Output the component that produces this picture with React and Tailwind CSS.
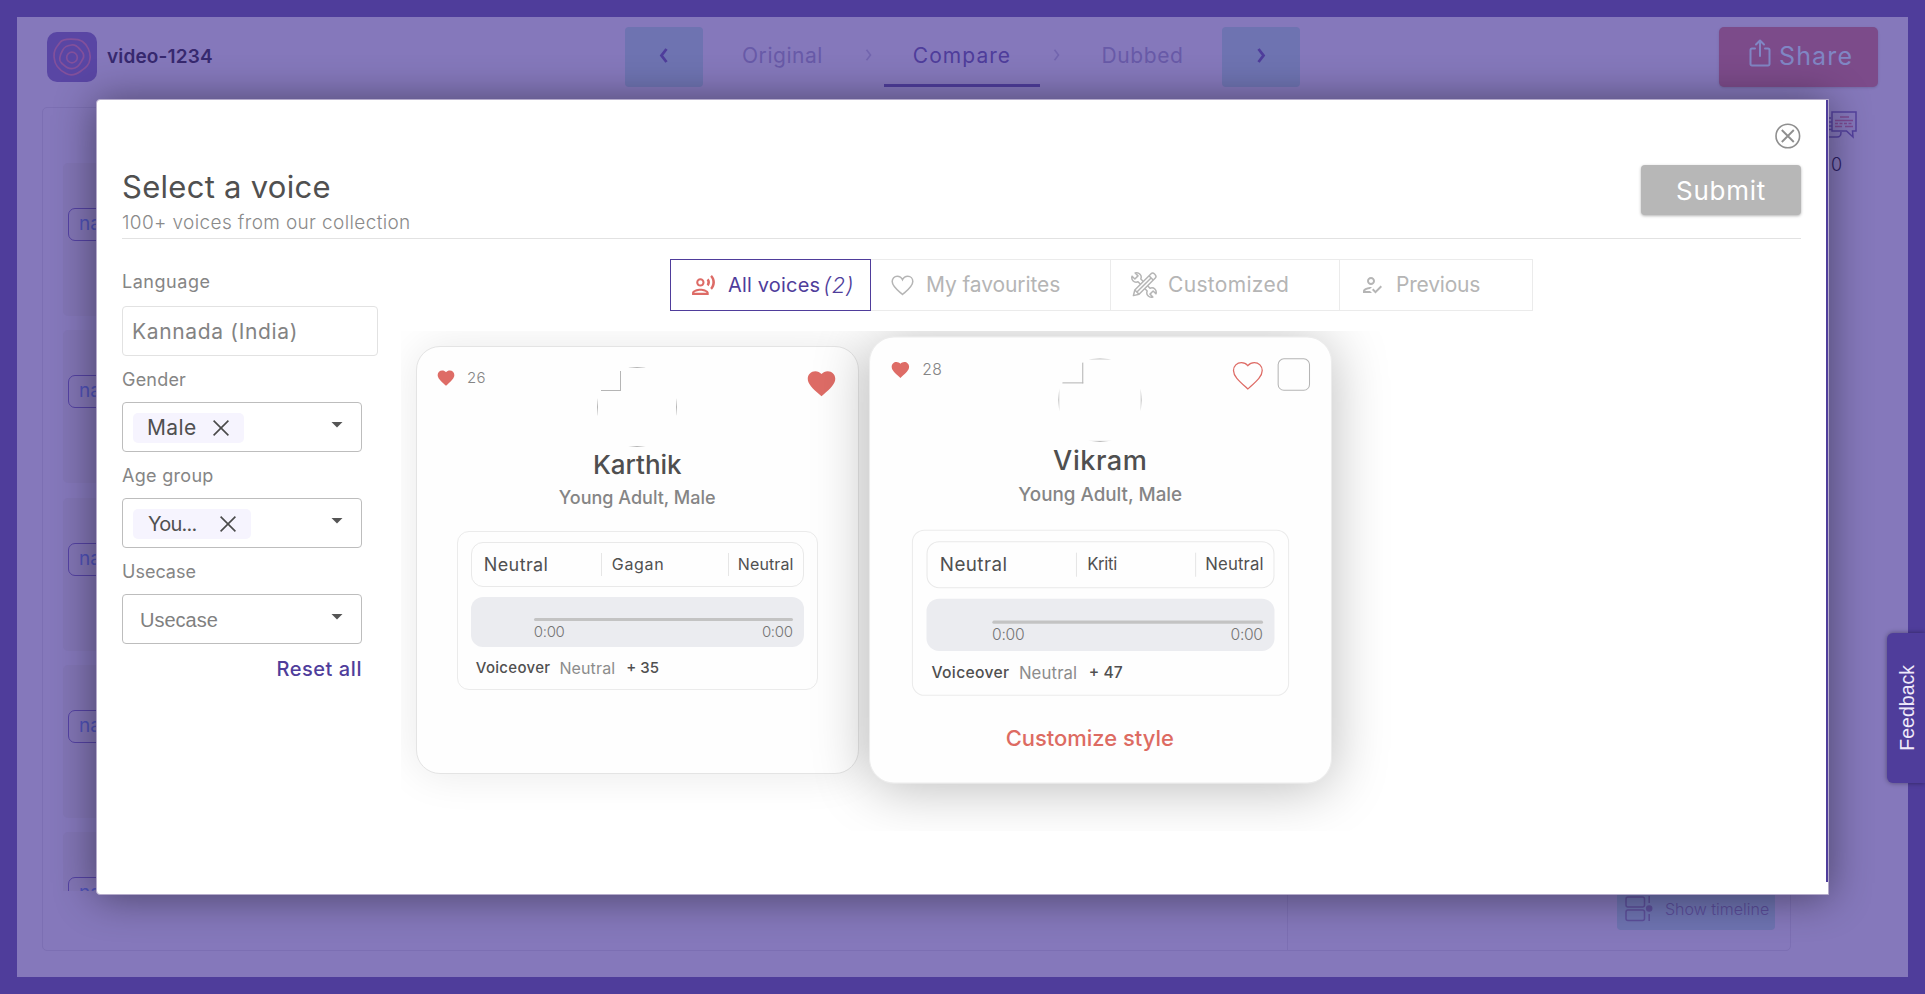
import { MdFavorite, MdOutlineRecordVoiceOver, MdOutlineHowToReg } from "react-icons/md";

const HEART =
  "m12 21.35-1.45-1.32C5.4 15.36 2 12.28 2 8.5 2 5.42 4.42 3 7.5 3c1.74 0 3.41.81 4.5 2.09C13.09 3.81 14.76 3 16.5 3 19.58 3 22 5.42 22 8.5c0 3.78-3.4 6.86-8.55 11.54L12 21.35z";

function ToolsIcon() {
  return (
    <svg width="26" height="26" viewBox="0 0 26 26" fill="none" stroke="#b5b5b5" strokeWidth="1.5" strokeLinejoin="round">
      <g transform="rotate(-45 13 13)">
        <path d="M11 6.500v13c-1.800.8-2.800 2.200-2.800 4 0 2 1 3.400 2.600 4.200v-4h4.400v4c1.600-.8 2.600-2.200 2.600-4.200 0-1.800-1-3.200-2.800-4v-13c1.800-.8 2.800-2.200 2.800-4 0-2-1-3.400-2.600-4.200v4h-4.400v-4C9.200-.900 8.200.500 8.200 2.500c0 1.800 1 3.200 2.800 4z" />
      </g>
      <g transform="rotate(45 13 13)">
        <path d="M10 0c0-3 6-3 6 0v23l-3 5-3-5z" fill="#fff" />
        <path d="M10 3h6M10 23h6M13 3v20" />
      </g>
    </svg>
  );
}

function Rings() {
  return (
    <svg width="38" height="38" viewBox="0 0 38 38" fill="none" stroke="#82509b" strokeWidth="1.7">
      <path d="M7 4.500C10 0 25 .5 29.500 3.500 34 6.500 38 14 37 21s-5 9-9 12-10 5-15 2.500S2 29 1.200 20 4 9 7 4.500z" />
      <path d="M9.500 12.500c2-4 4-4.500 9-5.500s7 3 9.500 5.500 3.500 6 1.500 9-3 8-9.500 9-8.500-3-11.500-5.500-1.500-8 1-12.500z" />
      <circle cx="19" cy="19.500" r="5.300" />
    </svg>
  );
}

function ShareIcon() {
  return (
    <svg width="22" height="28" viewBox="0 0 22 28" fill="none" stroke="#8086c4" strokeWidth="2" strokeLinecap="round" strokeLinejoin="round">
      <path d="M6 9.500H3a1.500 1.500 0 0 0-1.500 1.500v14A1.500 1.500 0 0 0 3 26.500h16a1.500 1.500 0 0 0 1.500-1.500V11A1.500 1.500 0 0 0 19 9.500h-3M11 17V2M7 5.500 11 1.500l4 4" />
    </svg>
  );
}

function ChatIcon() {
  return (
    <svg width="40" height="28" viewBox="0 0 40 28" fill="none" stroke="#54419f" strokeWidth="1.500">
      <path d="M14 7H3v16h2v4l5-1h10c3 0 4-1 4-5" />
      <path d="M15 1h24v19h-3.500l.5 6-6.500-6H15z" />
      <path d="M23 6h9M18 9.500h18M18 15.500h7M28 15.500h8" stroke="#7d4a93" />
      <path d="M18 12.500h18" stroke="#7d4a93" strokeDasharray="3 1.500" />
      <path d="M12 11h3M12 15h3M12 18.500h3" />
    </svg>
  );
}

function TimelineIcon() {
  return (
    <svg width="28" height="26" viewBox="0 0 28 26" fill="none" stroke="#5d4f9b" strokeWidth="1.500">
      <rect x="1" y="1" width="18.500" height="10" rx="2" />
      <rect x="1" y="14" width="18.500" height="10.500" rx="2" />
      <path d="M24.200 0v7M24.200 18v7" />
      <circle cx="24.200" cy="12.500" r="2.500" fill="#5d4f9b" />
    </svg>
  );
}

function Chevron({ dir, small }) {
  const d = dir === "left" ? "M8 1 3 7.500 8 14" : "M3 1l5 6.500L3 14";
  return small ? (
    <svg width="9" height="12" viewBox="0 0 11 15" fill="none" stroke="#7265ae" strokeWidth="2">
      <path d={d} />
    </svg>
  ) : (
    <svg width="12" height="15" viewBox="0 0 11 15" fill="none" stroke="#4f3d9b" strokeWidth="2.800">
      <path d={d} />
    </svg>
  );
}

function Header() {
  return (
    <header className="flex h-[80px] items-start">
      <div className="flex w-[608px] items-center pt-[15px] pl-[30px]">
        <div className="flex size-[50px] items-center justify-center rounded-[10px] bg-[#5946a4]">
          <Rings />
        </div>
        <span className="ml-[10px] text-[19px] leading-[50px] font-semibold tracking-[0.16px] text-[#37296f]">video-1234</span>
      </div>
      <nav className="mt-[10px] flex h-[60px] w-[675px] items-stretch text-[21px] leading-[57px]">
        <button className="flex w-[78px] items-center justify-center rounded-[4px] bg-[#6e73b1] pb-1">
          <Chevron dir="left" />
        </button>
        <span className="w-[159px] text-center tracking-[0.54px] text-[#685aa8]">Original</span>
        <span className="mr-[9px] flex w-[13px] items-center justify-center pb-1"><Chevron dir="right" small /></span>
        <span className="w-[156px] border-b-[3px] border-[#4f3d9b] text-center tracking-[1.04px] text-[#4f3d9b]">Compare</span>
        <span className="ml-[10px] flex w-[13px] items-center justify-center pb-1"><Chevron dir="right" small /></span>
        <span className="w-[159px] text-center tracking-[0.6px] text-[#685aa8]">Dubbed</span>
        <button className="flex w-[78px] items-center justify-center rounded-[4px] bg-[#6e73b1] pb-1">
          <Chevron dir="right" />
        </button>
      </nav>
      <button className="mt-[10px] mr-[30px] ml-auto flex h-[60px] w-[159px] rounded-[5px] bg-[#7c4b8a] pl-[30px] text-[#8086c4] shadow-sm">
        <span className="mt-[12px]"><ShareIcon /></span>
        <span className="ml-[8px] text-[25px] leading-[58px] tracking-[1.15px]">Share</span>
      </button>
    </header>
  );
}

function Workspace() {
  return (
    <div className="ml-[25px] flex pt-[10px]">
      <div className="flex h-[844px] w-[1749px] rounded-[5px] border border-[#7c6fb3]">
        <div className="w-[1245px] border-r border-[#7c6fb3] pt-[55px] pl-[20px]">
          <div className="h-[728px] space-y-[14.3px] overflow-hidden">
            {[0, 1, 2, 3, 4].map((i) => (
              <div key={i} className="h-[153px] w-[1180px] rounded-[5px] bg-[#8275b5] pt-[45px] pl-[5px]">
                <div className="h-[33px] w-[120px] rounded-[7px] border border-[#5442a3] pl-[10px] text-[19px] leading-[29px] text-[#4f51b8]">
                  name
                </div>
              </div>
            ))}
          </div>
        </div>
        <div className="flex flex-1 items-end justify-end pr-[15px] pb-[20px]">
          <button className="flex h-[46px] w-[158px] items-center rounded-[4px] bg-[#6e73b1] pt-[4px] pl-[8px] text-[16px] font-light whitespace-nowrap text-[#5a4c99]">
            <TimelineIcon />
            <span className="ml-[12px]">Show timeline</span>
          </button>
        </div>
      </div>
      <div className="pt-[4px] pl-[26px]">
        <ChatIcon />
        <div className="mt-[14px] ml-[14px] text-[18px] leading-[24px] font-light text-[#2e2166]">0</div>
      </div>
    </div>
  );
}

function CloseX() {
  return (
    <svg width="16" height="16" viewBox="0 0 16 16" fill="none" stroke="#4a4a4a" strokeWidth="1.600">
      <path d="M.6.600l14.800 14.800M15.400.600.600 15.400" />
    </svg>
  );
}

function Field({ label, tracking, children }) {
  return (
    <div>
      <div className={"mt-[11px] mb-[10px] text-[18px] leading-[25px] text-[#858585] " + tracking}>{label}</div>
      <div className="flex h-[50px] w-[240px] items-center rounded-[4px] border border-[#bdbdbd] pr-[18px] pl-[10px]">
        {children}
        <svg className="mb-[4px] ml-auto" width="12" height="6" viewBox="0 0 12 6"><path d="M.5 0h11L6 5.500z" fill="#555" /></svg>
      </div>
    </div>
  );
}

function Sidebar() {
  return (
    <aside className="w-[279px] pt-[31px]">
      <div className="text-[18px] leading-[24px] tracking-[0.53px] text-[#858585]">Language</div>
      <div className="mt-[12px] h-[50px] w-[256px] rounded-[4px] border border-[#e2e2e2] pl-[9px] text-[21px] leading-[50px] tracking-[0.66px] text-[#838383]">
        Kannada (India)
      </div>
      <Field label="Gender" tracking="tracking-[0.2px]">
        <span className="mt-[2px] flex h-[30px] w-[111px] items-center rounded-[5px] bg-[#f6f4fe] pl-[14px]">
          <span className="w-[66px] text-[21px] tracking-[0.4px] text-[#505050]">Male</span>
          <CloseX />
        </span>
      </Field>
      <Field label="Age group" tracking="tracking-[0.3px]">
        <span className="mt-[2px] flex h-[30px] w-[118px] items-center rounded-[5px] bg-[#f6f4fe] pl-[15px]">
          <span className="w-[72px] text-[20px] tracking-[-0.78px] text-[#505050]">You...</span>
          <CloseX />
        </span>
      </Field>
      <Field label="Usecase" tracking="tracking-[0px]">
        <span className="pt-[2px] pl-[7px] font-['Liberation_Sans',sans-serif] text-[20px] text-[#808080]">Usecase</span>
      </Field>
      <div className="mt-[13px] w-[240px] text-right text-[20px] leading-[24px] font-medium tracking-[0.56px] text-[#4f3d9b]">Reset all</div>
    </aside>
  );
}

function Tabs() {
  return (
    <div className="ml-[269px] flex h-[52px] text-[21px] leading-[52px] text-[#b5b5b5]">
      <div className="flex w-[201px] items-center border border-[#4f3d9b] pl-[20px] text-[20px] text-[#4f3d9b]">
        <MdOutlineRecordVoiceOver size={25} color="#dd6b66" />
        <span className="ml-[12px] tracking-[0.18px]">All voices</span>
        <span className="ml-[3px] text-[22px] font-light tracking-[0.8px] italic">(2)</span>
      </div>
      <div className="flex w-[240px] items-center border-y border-r border-[#ebebeb] pl-[20px]">
        <svg width="23" height="21" viewBox="0 0 23 21" fill="none" stroke="#b5b5b5" strokeWidth="1.500">
          <path d="M11.500 19.500C7 15.500 1.200 11.500 1.200 6.500 1.200 3.500 3.400 1.300 6.200 1.300c2.300 0 4.300 1.300 5.300 3.500 1-2.200 3-3.500 5.300-3.500 2.800 0 5 2.200 5 5.200 0 5-5.800 9-10.300 13z" />
        </svg>
        <span className="ml-[12px] tracking-[-0.1px]">My favourites</span>
      </div>
      <div className="flex w-[229px] items-center border-y border-r border-[#ebebeb] pl-[20px]">
        <ToolsIcon />
        <span className="ml-[11px] tracking-[0.32px]">Customized</span>
      </div>
      <div className="flex w-[193px] items-center border-y border-r border-[#ebebeb] pl-[20px]">
        <MdOutlineHowToReg size={24} />
        <span className="ml-[12px] tracking-[-0.2px]">Previous</span>
      </div>
    </div>
  );
}

function Avatar() {
  return (
    <div className="size-[80px] overflow-hidden rounded-full">
      <div className="size-[80px] border border-[#b5b5b5] pt-[3px] pl-[3px]">
        <div className="size-[20px] border-r border-b border-[#b5b5b5]" />
      </div>
    </div>
  );
}

function VoiceCard({ likes, name, nameTracking, actor, columns, extra, selected }) {
  return (
    <article
      className={
        "h-[428px] w-[442.5px] shrink-0 rounded-[24px] border bg-[#fefefe] " +
        (selected
          ? "z-10 scale-[1.045] border-[#ececec] shadow-[0_4px_54px_rgba(0,0,0,0.27)]"
          : "border-[#e4e4e4] shadow-[0_0_44px_rgba(0,0,0,0.09)]")
      }
    >
      <div className="grid grid-cols-[1fr_80px_1fr] pt-[20px] pr-[20px] pl-[19px]">
        <div className="flex h-[22px] items-center text-[15px] text-[#858585]">
          <MdFavorite size={20} color="#de6c66" />
          <span className="ml-[11px] font-light tracking-[0.35px]">{likes}</span>
        </div>
        <Avatar />
        <div className="flex justify-end">
          {selected ? (
            <>
              <svg width="33" height="33" viewBox="0 0 24 24" fill="none" stroke="#de6c66" strokeWidth="0.9"><path d={HEART} /></svg>
              <span className="ml-[12px] size-[31px] rounded-[6px] border border-[#b5b5b5]" />
            </>
          ) : (
            <MdFavorite size={33} color="#de6c66" />
          )}
        </div>
      </div>
      <h3 className={"text-center text-[26px] leading-[36px] font-medium text-[#4f4f4f] " + nameTracking}>{name}</h3>
      <p className="mt-[3px] text-center text-[18px] leading-[24px] font-medium text-[#858585]">Young Adult, Male</p>
      <div className="mx-auto mt-[21px] h-[159px] w-[361px] rounded-[12px] border border-[#ebebeb] px-[13px] pt-[10px]">
        <div className={"grid h-[45px] items-center rounded-[12px] border border-[#e9e9e9] text-[16px] text-[#505050] " + columns}>
          <span className="pl-[12px] text-[18px] tracking-[0.4px]">Neutral</span>
          <span className="border-l border-[#e6e6e6] pl-[10px] leading-[23px]">{actor}</span>
          <span className="border-l border-[#e6e6e6] pl-[9px] leading-[23px] tracking-[0.13px]">Neutral</span>
        </div>
        <div className="mt-[10px] h-[50px] rounded-[12px] bg-[#ebecf0] pt-[21px] pr-[11px] pl-[63px]">
          <div className="h-[3px] rounded-full bg-[#c3c3c3]" />
          <div className="mt-[1px] flex justify-between text-[15px] leading-[20px] font-light tracking-[-0.3px] text-[#757575]">
            <span>0:00</span>
            <span>0:00</span>
          </div>
        </div>
        <div className="mt-[9px] flex pl-[5px] text-[15px] leading-[24px] text-[#505050]">
          <span className="font-medium tracking-[0.31px]">Voiceover</span>
          <span className="ml-[9px] text-[16px] tracking-[0.13px] text-[#8c8c8c]">Neutral</span>
          <span className="ml-[11px] font-medium">{extra}</span>
        </div>
      </div>
      {selected && (
        <div className="mt-[25px] mr-[20px] text-center text-[21px] leading-[32px] font-medium text-[#dd6b62]">Customize style</div>
      )}
    </article>
  );
}

function VoiceDialog() {
  return (
    <div className="absolute top-[99px] left-[96px] h-[796px] w-[1733px] rounded-tl-[4px] rounded-bl-[4px] border border-[#b5abcb] bg-white shadow-[0_2px_42px_rgba(0,0,0,0.45)]">
      <div className="flex h-[782px]">
        <div className="flex w-[1729px] flex-col overflow-hidden pl-[25px]">
          <div className="flex h-[65px] justify-end pt-[23px] pr-[25px]">
            <svg width="26" height="26" viewBox="0 0 26 26" fill="none" stroke="#8f8f8f" strokeWidth="1.600">
              <circle cx="12.800" cy="13" r="11.800" />
              <path d="m6.800 7 12 12M18.800 7l-12 12" strokeWidth="1.900" />
            </svg>
          </div>
          <div className="mr-[25px] flex h-[74px] justify-between border-b border-[#e2e2e2] pt-[2px]">
            <div>
              <h1 className="text-[31px] leading-[40px] tracking-[0.28px] text-[#505050]">Select a voice</h1>
              <p className="mt-[4px] text-[19px] leading-[24px] font-light tracking-[0.37px] text-[#8a8a8a]">100+ voices from our collection</p>
            </div>
            <button className="-mt-[2px] h-[50px] w-[160px] rounded-[4px] bg-[#b7b7b7] text-[26px] tracking-[0.74px] text-white shadow-[0_1px_3px_rgba(0,0,0,0.3)]">Submit</button>
          </div>
          <div className="flex">
            <Sidebar />
            <div className="flex-1 pt-[20px]">
              <Tabs />
              <div className="mt-[20px] flex h-[500px] gap-[20px] overflow-hidden pt-[15px] pl-[15px]">
                <VoiceCard likes="26" name="Karthik" nameTracking="tracking-[0px]" actor={<span className="tracking-[0.7px]">Gagan</span>} columns="grid-cols-[129px_127px_1fr]" extra="+ 35" />
                <VoiceCard likes="28" name="Vikram" nameTracking="tracking-[0.48px]" actor={<span className="tracking-[-0.3px]">Kriti</span>} columns="grid-cols-[142px_114px_1fr]" extra="+ 47" selected />
              </div>
            </div>
          </div>
        </div>
        <div className="w-[2px] bg-[#4f3d9b]" />
      </div>
    </div>
  );
}

export default function App() {
  return (
    <div className="relative h-[994px] w-[1925px] overflow-hidden bg-[#4f3d9b] p-[17px] font-['Inter',sans-serif]">
      <div className="h-[960px] bg-[#8578bb]">
        <Header />
        <Workspace />
      </div>
      <VoiceDialog />
      <div className="absolute top-[633px] right-0 flex h-[150px] w-[38px] items-center justify-center rounded-l-[6px] bg-[#4f3d9b] pl-[4px] shadow-[0_0_5px_rgba(0,0,0,0.4)]">
        <span className="rotate-180 font-['Liberation_Sans',sans-serif] text-[19.500px] text-[#efeafa] [writing-mode:vertical-rl]">Feedback</span>
      </div>
    </div>
  );
}
